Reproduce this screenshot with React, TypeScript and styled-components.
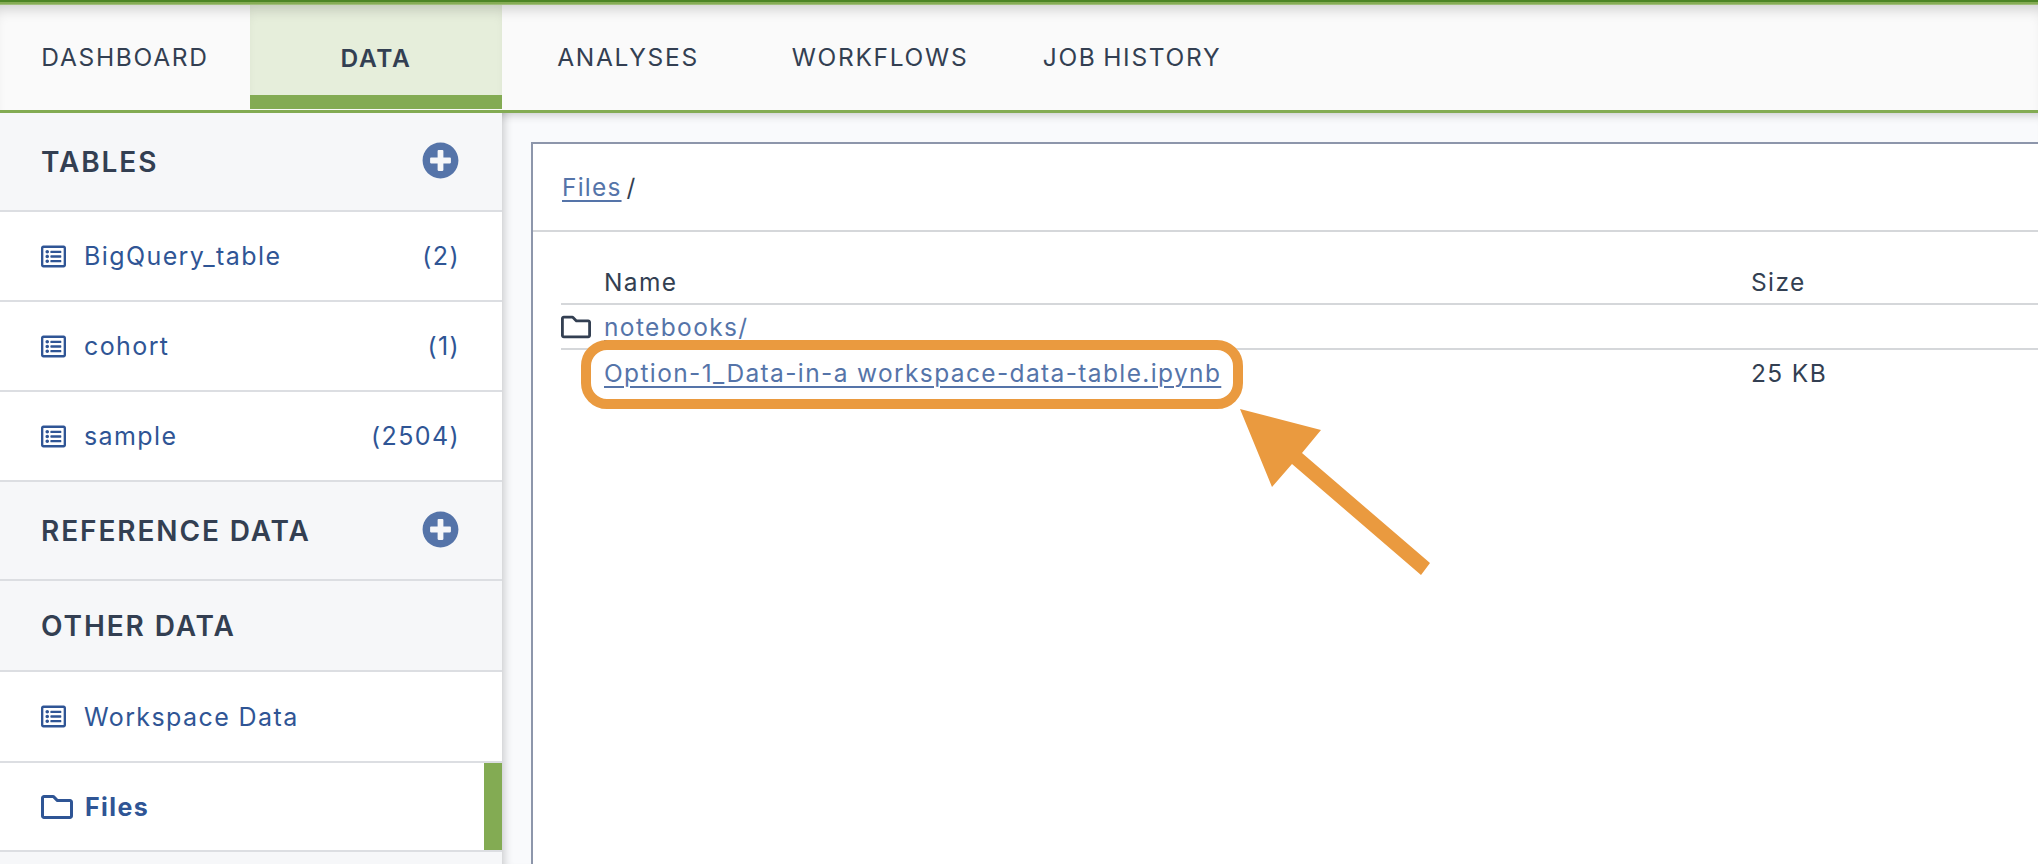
import React from "react";
import styled, { createGlobalStyle } from "styled-components";
import { FaPlusCircle, FaRegFolder, FaRegListAlt } from "react-icons/fa";

const Global = createGlobalStyle`
  html, body { margin: 0; padding: 0; background: #fff; }
  * { box-sizing: border-box; }
  body { font-family: Inter, "Open Sans", "Liberation Sans", sans-serif; }
`;

const Page = styled.div`
  position: relative;
  width: 2038px;
  height: 864px;
  overflow: hidden;
  display: flex;
  flex-direction: column;
  background: #f9fafc;
`;

const TopStripe = styled.div`
  height: 5px;
  flex: none;
  background: linear-gradient(#4d8526 0 2px, #86ac55 2px 4px, #b9cf9e 5px);
`;

const TabBar = styled.nav`
  flex: none;
  height: 108px;
  display: flex;
  align-items: stretch;
  background: #fafafa;
  box-shadow: inset 0 12px 14px -8px rgba(0, 0, 0, 0.18);
  border-bottom: 3px solid #83ab53;
`;

const Tab = styled.div<{ $active?: boolean; $first?: boolean }>`
  width: ${(p) => (p.$first ? 250 : 252)}px;
  flex: none;
  display: flex;
  align-items: center;
  justify-content: center;
  font-size: 24.5px;
  letter-spacing: 1.7px;
  word-spacing: -2px;
  font-weight: ${(p) => (p.$active ? 600 : 400)};
  color: #333f52;
  background: ${(p) => (p.$active ? "#e6eedb" : "transparent")};
  border-bottom: ${(p) => (p.$active ? "14px solid #83ab53" : "0")};
  margin-bottom: ${(p) => (p.$active ? "1px" : "0")};
  padding-top: ${(p) => (p.$active ? "15px" : "0")};
  padding-bottom: ${(p) => (p.$active ? "0" : "1px")};
  box-shadow: ${(p) => (p.$active ? "inset 0 12px 14px -8px rgba(0,0,0,.18)" : "none")};
`;

const Body = styled.div`
  flex: 1;
  min-height: 0;
  display: flex;
`;

const Sidebar = styled.aside`
  flex: none;
  width: 502px;
  background: #f6f7f9;
`;

const SectionHead = styled.div<{ $h: number }>`
  height: ${(p) => p.$h}px;
  display: flex;
  align-items: center;
  justify-content: space-between;
  padding: 1px 44px 0 41px;
  background: #f6f7f9;
  border-bottom: 2px solid #dcdee2;
  color: #333f52;
  font-size: 28px;
  letter-spacing: 1.9px;
  font-weight: 600;
  & svg {
    color: #5574a9;
    font-size: 37px;
    margin-top: -4px;
    margin-right: -1px;
  }
`;

const Item = styled.div<{ $active?: boolean; $h?: number }>`
  position: relative;
  height: ${(p) => p.$h ?? 90}px;
  display: flex;
  align-items: center;
  padding: 0 42px 0 41px;
  background: #fff;
  border-bottom: 2px solid #dcdee2;
  color: #2f5595;
  font-size: 25px;
  letter-spacing: 1.4px;
  font-weight: ${(p) => (p.$active ? 700 : 400)};
  & > svg {
    flex: none;
    font-size: 25px;
    margin-right: 18px;
  }
`;

const ItemFolderIcon = styled(FaRegFolder)`
  && {
    font-size: 32px;
    margin-right: 12px;
  }
`;

const ItemLabel = styled.span`
  flex: 1;
`;

const ActiveMark = styled.span`
  position: absolute;
  right: 0;
  top: 0;
  bottom: 0;
  width: 18px;
  background: #83ab53;
`;

const Main = styled.main`
  flex: 1;
  min-width: 0;
  padding: 29px 0 0 29px;
  box-shadow: inset 0 10px 10px -8px rgba(0, 0, 0, 0.2), inset 10px 0 10px -8px rgba(0, 0, 0, 0.2);
`;

const Panel = styled.section`
  height: 100%;
  margin-right: -4px;
  background: #fff;
  border: 2px solid #8d96ab;
  border-bottom: 0;
`;

const Breadcrumb = styled.div`
  height: 88px;
  display: flex;
  align-items: center;
  padding-left: 29px;
  gap: 5px;
  border-bottom: 2px solid #d5d7da;
  font-size: 24.5px;
  letter-spacing: 1.2px;
  color: #333f52;
`;

const LinkText = styled.a`
  color: #5574a9;
  text-decoration: underline;
  text-underline-offset: 4px;
  text-decoration-thickness: 2px;
`;

const FileTable = styled.div`
  margin-left: 28px;
  padding-top: 28px;
`;

const FileRow = styled.div<{ $h: number; $line?: boolean }>`
  height: ${(p) => p.$h}px;
  display: grid;
  grid-template-columns: 43px 1147px 1fr;
  align-items: center;
  font-size: 24.5px;
  letter-spacing: 1.37px;
  color: #333f52;
  border-bottom: ${(p) => (p.$line ? "2px solid #d5d7da" : "0")};
`;

const FolderCell = styled.span`
  display: flex;
  font-size: 30px;
  color: #333f52;
`;

const Highlight = styled.div`
  position: absolute;
  left: 581px;
  top: 340px;
  width: 662px;
  height: 69px;
  border: 10px solid #ea9a3f;
  border-radius: 26px;
  pointer-events: none;
`;

const Arrow = styled.svg`
  position: absolute;
  left: 1230px;
  top: 400px;
`;

const ListItem = ({ label, count, h }: { label: string; count?: string; h?: number }) => (
  <Item $h={h}>
    <FaRegListAlt />
    <ItemLabel>{label}</ItemLabel>
    {count && <span>{count}</span>}
  </Item>
);

const tabs = ["DASHBOARD", "DATA", "ANALYSES", "WORKFLOWS", "JOB HISTORY"];

export default function App() {
  return (
    <Page>
      <Global />
      <TopStripe />
      <TabBar>
        {tabs.map((t, i) => (
          <Tab key={t} $first={i === 0} $active={t === "DATA"}>
            {t}
          </Tab>
        ))}
      </TabBar>
      <Body>
        <Sidebar>
          <SectionHead $h={99}>
            TABLES
            <FaPlusCircle />
          </SectionHead>
          <ListItem label="BigQuery_table" count="(2)" />
          <ListItem label="cohort" count="(1)" />
          <ListItem label="sample" count="(2504)" />
          <SectionHead $h={99}>
            REFERENCE DATA
            <FaPlusCircle />
          </SectionHead>
          <SectionHead $h={91}>OTHER DATA</SectionHead>
          <ListItem label="Workspace Data" h={91} />
          <Item $active $h={89}>
            <ItemFolderIcon />
            <ItemLabel>Files</ItemLabel>
            <ActiveMark />
          </Item>
        </Sidebar>
        <Main>
          <Panel>
            <Breadcrumb>
              <LinkText>Files</LinkText> /
            </Breadcrumb>
            <FileTable>
              <FileRow $h={45} $line>
                <span />
                <span>Name</span>
                <span>Size</span>
              </FileRow>
              <FileRow $h={45} $line>
                <FolderCell>
                  <FaRegFolder />
                </FolderCell>
                <span>
                  <LinkText>notebooks/</LinkText>
                </span>
                <span />
              </FileRow>
              <FileRow $h={45}>
                <span />
                <span>
                  <LinkText>Option-1_Data-in-a workspace-data-table.ipynb</LinkText>
                </span>
                <span>25 KB</span>
              </FileRow>
            </FileTable>
          </Panel>
        </Main>
      </Body>
      <Highlight />
      <Arrow width="210" height="185" viewBox="1230 400 210 185">
        <path fill="#ea9a3f" d="M1240 409 L1321 430 L1302 453 L1430 563 L1421 575 L1292 464 L1272 487 Z" />
      </Arrow>
    </Page>
  );
}
